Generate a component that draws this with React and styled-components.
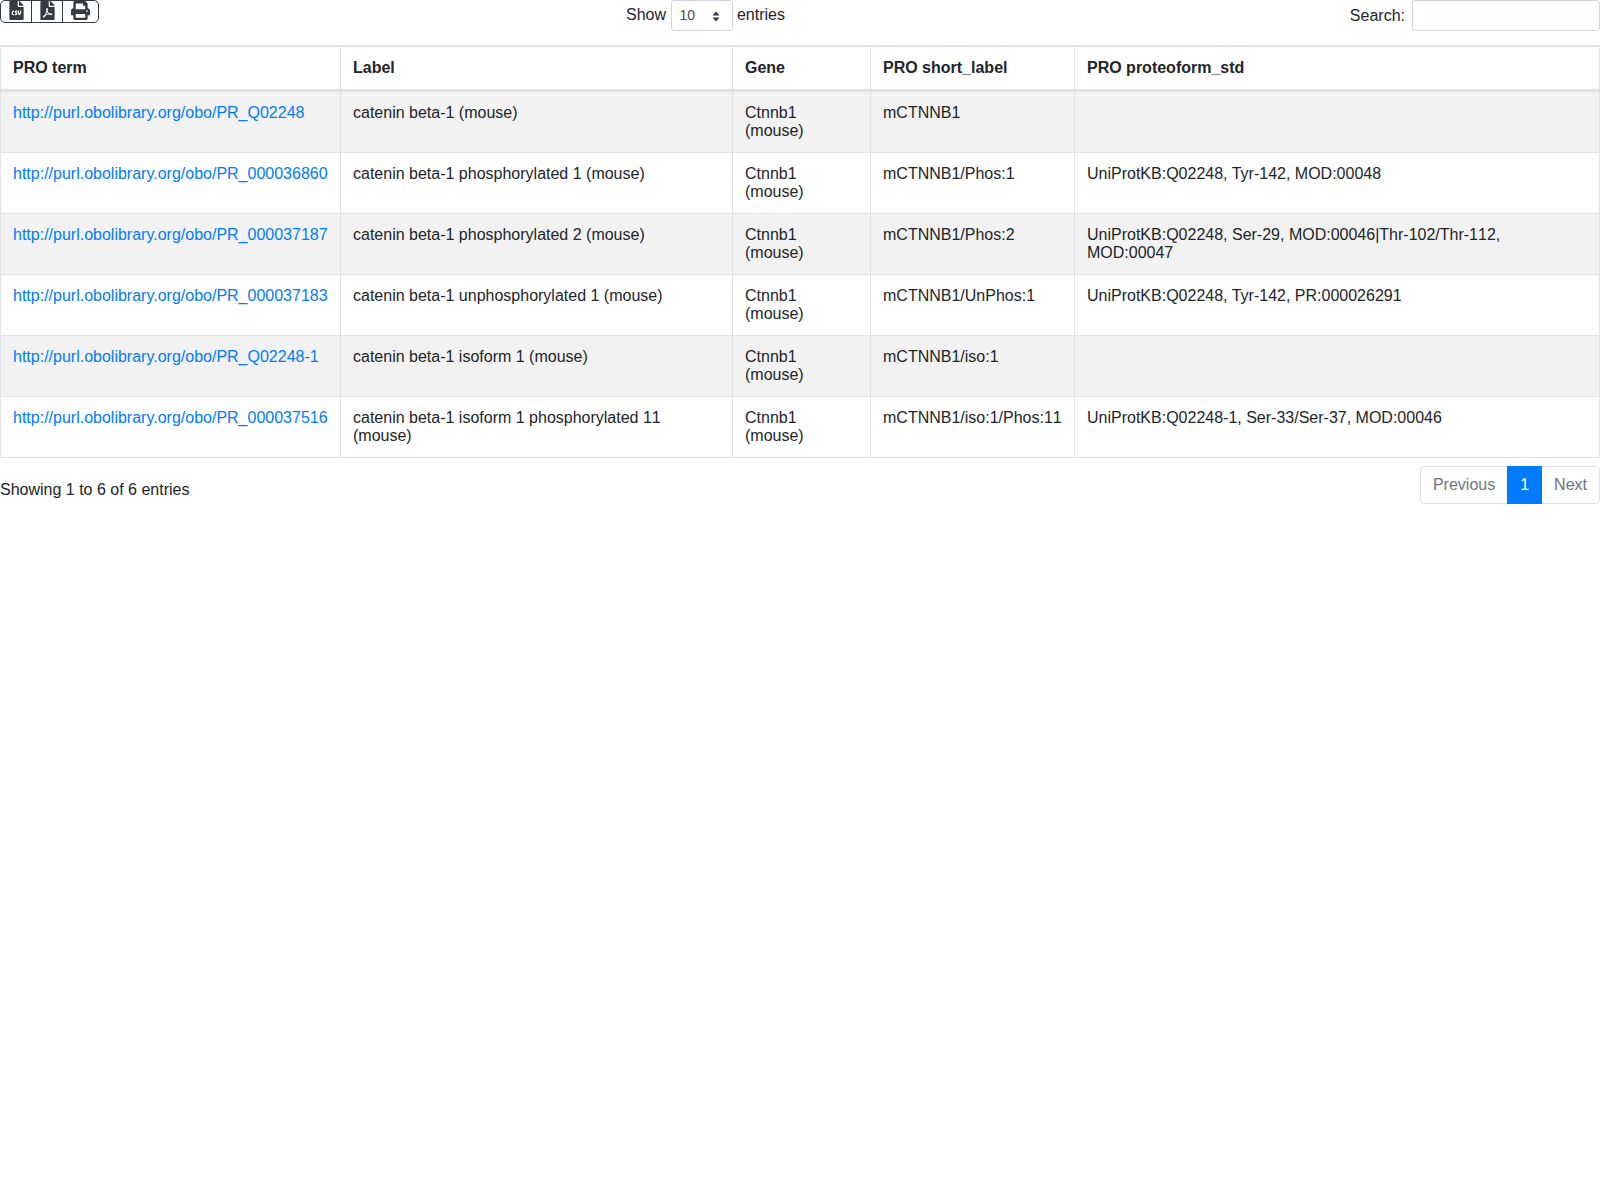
import React from 'react'
import styled, { createGlobalStyle } from 'styled-components'
import { FaFileCsv, FaFilePdf, FaPrint } from 'react-icons/fa'

const GlobalStyle = createGlobalStyle`
  body {
    margin: 0;
    background: #fff;
    color: #212529;
    font-family: "Liberation Sans", Arial, sans-serif;
    font-size: 16px;
    line-height: 24px;
  }
`
const Toolbar = styled.div`
  display: grid;
  grid-template-columns: 500.5px 410px 1fr;
  height: 45px;
  align-items: start;
`
const ButtonGroup = styled.div`
  display: inline-flex;
  justify-self: start;
  height: 21px;
  border: 1px solid #343a40;
  border-radius: 5px;
  overflow: hidden;
`
const IconButton = styled.div`
  display: flex;
  align-items: flex-start;
  justify-content: center;
  width: ${props => props.width}px;
  color: #343a40;
  font-size: 19px;
  border-left: ${props => (props.first ? 'none' : '1px solid #343a40')};
  svg {
    display: block;
  }
`
const LengthLabel = styled.label`
  display: flex;
  justify-content: center;
  align-items: flex-start;
  gap: 4.45px;
  line-height: 30px;
`
const Select = styled.div`
  position: relative;
  box-sizing: border-box;
  width: 62px;
  height: 31px;
  padding: 4px 8px;
  font-size: 14px;
  line-height: 21px;
  color: #495057;
  border: 1px solid #ced4da;
  border-radius: 3.2px;
`
const SelectArrows = styled.svg`
  position: absolute;
  top: 10px;
  right: 12px;
  width: 8px;
  height: 11px;
`
const SearchLabel = styled.label`
  display: flex;
  justify-content: flex-end;
  align-items: center;
  gap: 7px;
  height: 31px;
`
const SearchInput = styled.div`
  box-sizing: border-box;
  width: 188px;
  height: 31px;
  border: 1px solid #ced4da;
  border-radius: 3.2px;
`
const Table = styled.table`
  width: 1600px;
  table-layout: fixed;
  border-collapse: separate;
  border-spacing: 0;
  line-height: 18px;
`
const HeadCell = styled.th`
  box-sizing: border-box;
  padding: 12px;
  text-align: left;
  font-weight: 700;
  border-style: solid;
  border-color: #dee2e6;
  border-width: 2px 1px 3px 0;
  &:first-child {
    border-left-width: 1px;
  }
`
const Row = styled.tr`
  background: ${props => (props.odd ? '#f2f2f2' : '#fff')};
`
const Cell = styled.td`
  padding: 12px;
  vertical-align: top;
  border-style: solid;
  border-color: #dee2e6;
  border-width: 0 1px 1px 0;
  font-kerning: ${props => (props.$plain ? 'none' : 'auto')};
  &:first-child {
    border-left-width: 1px;
  }
`
const Link = styled.a`
  color: #007bff;
  text-decoration: none;
`
const Footer = styled.div`
  display: flex;
  justify-content: space-between;
  align-items: flex-start;
  padding-top: 8px;
`
const Info = styled.div`
  padding-top: 12px;
`
const Pagination = styled.div`
  display: flex;
`
const PageItem = styled.div`
  padding: 6px 12px;
  margin-left: -1px;
  color: ${props => (props.active ? '#fff' : '#6c757d')};
  background: ${props => (props.active ? '#007bff' : '#fff')};
  border: 1px solid ${props => (props.active ? '#007bff' : '#dee2e6')};
  position: ${props => (props.active ? 'relative' : 'static')};
  &:first-child {
    border-radius: 4px 0 0 4px;
  }
  &:last-child {
    border-radius: 0 4px 4px 0;
  }
`

const columns = [
  { title: 'PRO term', width: 341 },
  { title: 'Label', width: 392 },
  { title: 'Gene', width: 138 },
  { title: 'PRO short_label', width: 204 },
  { title: 'PRO proteoform_std', width: 525 },
]

const rows = [
  ['PR_Q02248', 'catenin beta-1 (mouse)', 'mCTNNB1', ''],
  ['PR_000036860', 'catenin beta-1 phosphorylated 1 (mouse)', 'mCTNNB1/Phos:1', 'UniProtKB:Q02248, Tyr-142, MOD:00048'],
  ['PR_000037187', 'catenin beta-1 phosphorylated 2 (mouse)', 'mCTNNB1/Phos:2', 'UniProtKB:Q02248, Ser-29, MOD:00046|Thr-102/Thr-112, MOD:00047'],
  ['PR_000037183', 'catenin beta-1 unphosphorylated 1 (mouse)', 'mCTNNB1/UnPhos:1', 'UniProtKB:Q02248, Tyr-142, PR:000026291'],
  ['PR_Q02248-1', 'catenin beta-1 isoform 1 (mouse)', 'mCTNNB1/iso:1', ''],
  ['PR_000037516', 'catenin beta-1 isoform 1 phosphorylated 11 (mouse)', 'mCTNNB1/iso:1/Phos:11', 'UniProtKB:Q02248-1, Ser-33/Ser-37, MOD:00046'],
]

// "11" sits a pixel wider in the original than the font's kerning gives
const hasOnes = text => text.includes('11')

export default function App() {
  return (
    <>
      <GlobalStyle />
      <Toolbar>
        <ButtonGroup>
          <IconButton first width={30}><FaFileCsv /></IconButton>
          <IconButton width={30}><FaFilePdf /></IconButton>
          <IconButton width={35}><FaPrint /></IconButton>
        </ButtonGroup>
        <LengthLabel>
          Show
          <Select>
            10
            <SelectArrows viewBox="0 0 8 11">
              <path d="M4 0.5 L7.5 4.5 H0.5 Z M4 10.5 L0.5 6.5 H7.5 Z" fill="#343a40" />
            </SelectArrows>
          </Select>
          entries
        </LengthLabel>
        <SearchLabel>
          Search:
          <SearchInput />
        </SearchLabel>
      </Toolbar>
      <Table>
        <colgroup>
          {columns.map(col => <col key={col.title} width={col.width} />)}
        </colgroup>
        <thead>
          <tr>
            {columns.map(col => <HeadCell key={col.title}>{col.title}</HeadCell>)}
          </tr>
        </thead>
        <tbody>
          {rows.map((row, i) => (
            <Row key={row[0]} odd={i % 2 === 0}>
              <Cell><Link href="#">http://purl.obolibrary.org/obo/{row[0]}</Link></Cell>
              <Cell $plain={hasOnes(row[1])}>{row[1]}</Cell>
              <Cell>Ctnnb1<br />(mouse)</Cell>
              <Cell $plain={hasOnes(row[2])}>{row[2]}</Cell>
              <Cell $plain={hasOnes(row[3])}>{row[3]}</Cell>
            </Row>
          ))}
        </tbody>
      </Table>
      <Footer>
        <Info>Showing 1 to 6 of 6 entries</Info>
        <Pagination>
          <PageItem>Previous</PageItem>
          <PageItem active>1</PageItem>
          <PageItem>Next</PageItem>
        </Pagination>
      </Footer>
    </>
  )
}
